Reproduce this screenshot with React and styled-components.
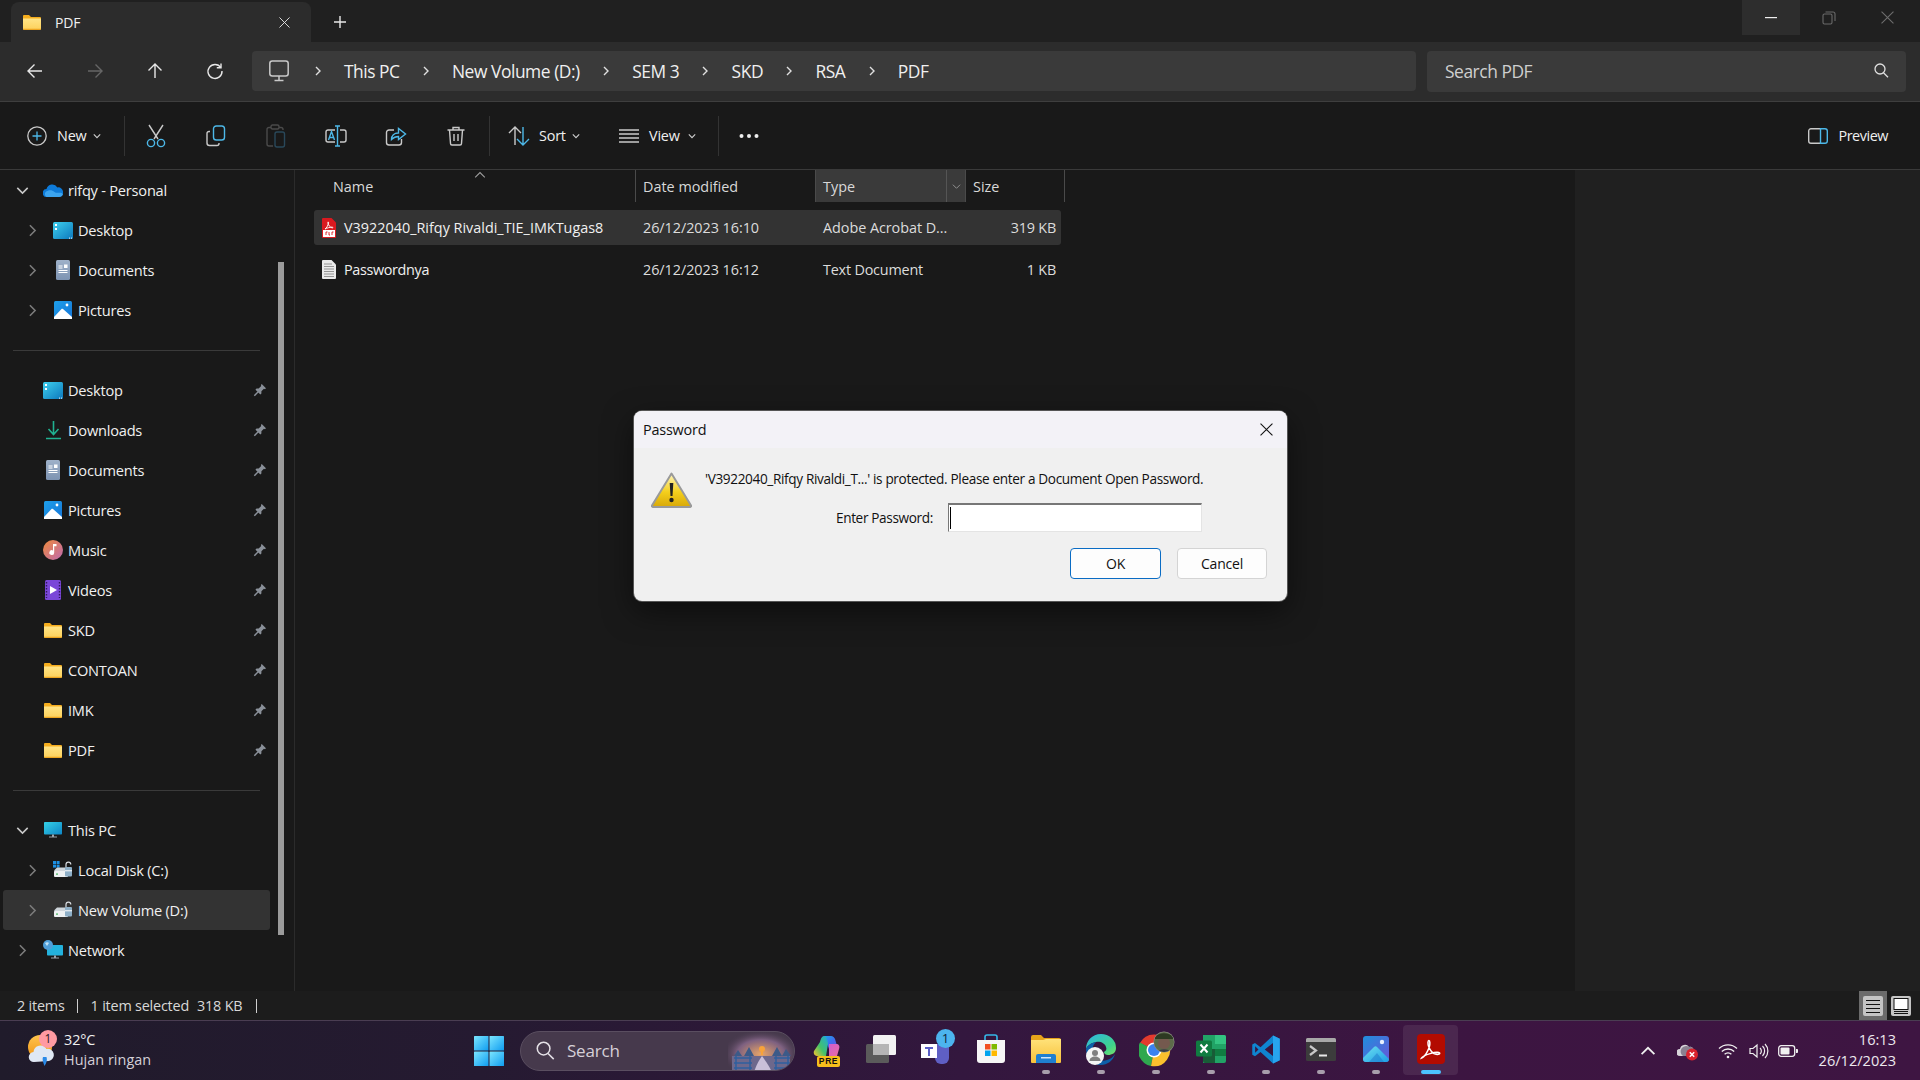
import React from "react";
import styled, { createGlobalStyle } from "styled-components";

const Global = createGlobalStyle`
  html, body { margin: 0; padding: 0; background: #191919; }
  * { box-sizing: border-box; }
  body { font-family: "Open Sans", "Noto Sans", "Liberation Sans", sans-serif; }
`;

const Screen = styled.div`
  position: relative; width: 1920px; height: 1080px; overflow: hidden;
  display: flex; flex-direction: column; color: #f0f0f0; background: #191919;
  font-size: 14px; letter-spacing: -0.2px;
`;

/* Title bar */
const TitleBar = styled.div`
  height: 42px; flex: none; background: #202020; display: flex; align-items: flex-start;
`;
const Tab = styled.div`
  width: 300px; height: 40px; margin: 2px 0 0 11px; padding: 0 21px 0 12px; background: #2c2c2c;
  border-radius: 8px 8px 0 0; display: flex; align-items: center; font-size: 14px;
`;
const TabLabel = styled.span` margin-left: 14px; flex: 1; `;
const NewTab = styled.div` margin: 14px 0 0 21px; width: 16px; height: 16px; display: flex; `;
const WindowControls = styled.div` margin-left: auto; margin-right: 4px; display: flex; `;
const WindowButton = styled.div`
  width: 58px; height: 35px; display: flex; align-items: center; justify-content: center;
  background: ${p => (p.$hover ? "#2d2d2d" : "transparent")};
`;

/* Address row */
const AddressRow = styled.div`
  height: 60px; flex: none; background: #2c2c2c; border-bottom: 1px solid #3e3e3e;
  display: flex; align-items: flex-start; padding: 9px 14px 0 5px;
`;
const NavButton = styled.div`
  width: 60px; height: 40px; display: flex; align-items: center; justify-content: center;
`;
const AddressBar = styled.div`
  flex: 1; height: 40px; margin-left: 7px; border-radius: 4px; background: #3a3a3a;
  display: flex; align-items: center; gap: 21.2px; padding-left: 17px; font-size: 17.4px; letter-spacing: -0.45px;
`;
const MonitorBox = styled.div` display: flex; margin-right: 2.5px; `;
const SearchBox = styled.div`
  width: 479px; height: 41px; margin-left: 11px; border-radius: 4px; background: #3a3a3a;
  display: flex; align-items: center; justify-content: space-between; padding: 0 17px 2px 18px;
  font-size: 17.4px; letter-spacing: -0.45px; color: #cfcfcf;
`;

/* Command bar */
const CommandBar = styled.div`
  height: 68px; flex: none; background: #191919; border-bottom: 1px solid #3a3a3a;
  display: flex; align-items: center; padding-left: 27px; padding-right: 32px; font-size: 14.4px;
`;
const MenuButton = styled.div`
  width: ${p => p.$w}px; padding-left: ${p => p.$pad || 0}px; display: flex; align-items: center; flex: none;
`;
const MenuLabel = styled.span` margin: 0 ${p => p.$right || 7}px 0 ${p => p.$left || 9}px; `;
const CommandSep = styled.div`
  width: 1px; height: 40px; flex: none; background: #333; margin-left: ${p => p.$ml || 0}px;
`;
const ToolButton = styled.div`
  width: 60px; flex: none; display: flex; justify-content: center; align-items: center;
  margin-left: ${p => p.$ml || 0}px;
`;
const MoreDots = styled.div` margin-left: 20px; display: flex; `;
const PreviewButton = styled.div`
  margin-left: auto; display: flex; align-items: center; gap: 10px; letter-spacing: -0.45px;
`;

/* Body */
const Body = styled.div` flex: 1; min-height: 0; display: flex; background: #191919; `;
const Sidebar = styled.div`
  width: 295px; flex: none; border-right: 1px solid #2b2b2b; display: flex;
`;
const NavList = styled.div` width: 267px; margin-left: 3px; flex: none; `;
const NavRow = styled.div`
  height: 40px; display: flex; align-items: center; border-radius: 3px; padding-right: 3px;
  padding-left: ${p => 11 + p.$level * 10}px; background: ${p => (p.$selected ? "#333" : "transparent")};
  font-size: 14.6px; letter-spacing: -0.22px;
`;
const ChevronSlot = styled.div` width: 16px; flex: none; display: flex; justify-content: center; `;
const NavIcon = styled.div` width: 26px; margin: 0 2px 0 10px; flex: none; display: flex; justify-content: center; `;
const PinSlot = styled.div` margin-left: auto; display: flex; `;
const NavSep = styled.div` height: 1px; margin: 20px 10px 19px 10px; background: #3a3a3a; `;
const ScrollTrack = styled.div` width: 6px; margin-left: 8px; flex: none; `;
const ScrollThumb = styled.div` margin-top: 92px; height: 673px; background: #9b9b9b; `;

const FileArea = styled.div` width: 1280px; flex: none; padding-left: 19px; `;
const HeaderGrid = styled.div`
  display: grid; grid-template-columns: 322px 180px 150px 99px; width: 751px; height: 32px; font-size: 14.4px; color: #d8d8d8;
  letter-spacing: 0;
`;
const HeaderCell = styled.div`
  position: relative; display: flex; align-items: center; border-right: 1px solid #4a4a4a;
  padding-left: ${p => p.$pad}px; background: ${p => (p.$hover ? "#3a3a3a" : "transparent")};
`;
const SortCaret = styled.div` position: absolute; left: 160px; top: -1px; display: flex; `;
const DropSplit = styled.div`
  position: absolute; right: 0; top: 0; bottom: 0; width: 19px; border-left: 1px solid #555;
  display: flex; align-items: center; justify-content: center;
`;
const FileList = styled.div` margin-top: 8px; display: flex; flex-direction: column; gap: 7px; `;
const FileRow = styled.div`
  display: grid; grid-template-columns: 322px 180px 150px 95px; width: 747px; height: 35px; align-items: center;
  border-radius: 3px; background: ${p => (p.$selected ? "#333" : "transparent")}; font-size: 14.4px;
`;
const FileName = styled.div` display: flex; align-items: center; padding-left: 8px; gap: 8px; `;
const NameText = styled.span` letter-spacing: ${p => p.$ls}px; `;
const FileCell = styled.div` padding-left: 7px; color: #dcdcdc; white-space: nowrap; letter-spacing: ${p => p.$ls ?? -0.05}px; `;
const FileSize = styled.div` text-align: right; padding-right: 5px; color: #dcdcdc; `;
const PreviewPane = styled.div` flex: 1; background: #202020; `;

/* Status bar */
const StatusBar = styled.div`
  height: 29px; flex: none; background: #1c1c1c; display: flex; align-items: center; padding: 0 9px 0 17px;
  font-size: 14.4px; color: #d8d8d8;
`;
const StatusSep = styled.span` width: 1px; height: 14px; background: #cfcfcf; margin: 0 13px 0 ${p => p.$ml || 12}px; `;
const StatusSpacer = styled.span` margin-left: ${p => p.$ml}px; `;
const ViewToggles = styled.div` margin-left: auto; display: flex; gap: 4px; align-items: center; `;
const ToggleFrame = styled.div`
  height: 29px; display: flex; align-items: center; justify-content: center;
  background: ${p => (p.$active ? "#6b6b6b" : "transparent")}; width: ${p => (p.$active ? 28 : 20)}px;
`;
const ToggleFace = styled.div`
  width: 20px; height: 20px; border-radius: 2px; background: #c4c4c4; display: flex;
`;

/* Taskbar */
const Taskbar = styled.div`
  height: 60px; flex: none; display: flex; align-items: center; border-top: 1px solid #4a3d52;
  background: linear-gradient(90deg, #201b2b 0%, #251a31 25%, #33173e 50%, #3c1541 75%, #3e1542 100%);
  letter-spacing: 0;
`;
const Weather = styled.div` width: 474px; flex: none; padding-left: 27px; display: flex; align-items: center; `;
const WeatherIcon = styled.div` position: relative; width: 30px; height: 36px; flex: none; display: flex; align-items: center; `;
const WeatherBadge = styled.div`
  position: absolute; left: 12px; top: -3px; width: 18px; height: 18px; border-radius: 50%;
  background: #ff9aa2; color: #2a1a22; font-size: 12px; line-height: 18px; text-align: center;
`;
const WeatherText = styled.div`
  margin: -2px 0 0 7px; display: flex; flex-direction: column; gap: 1px; font-size: 14.4px; line-height: 19px; letter-spacing: -0.1px;
`;
const WeatherSub = styled.span` color: #d5d0d8; letter-spacing: 0.05px; `;
const StartButton = styled.div` width: 30px; height: 30px; flex: none; margin-right: 16px; display: flex; `;
const SearchPill = styled.div`
  position: relative; overflow: hidden; width: 275px; height: 40px; flex: none; border-radius: 20px; margin-right: 3px;
  background: #46394c; border: 1px solid #5a4e60; display: flex; align-items: center; padding-left: 15px; gap: 12px;
  font-size: 17px; color: #d6d0d8; letter-spacing: -0.2px;
`;
const PillScene = styled.div` position: absolute; right: 0; top: 0; bottom: 0; display: flex; `;
const TaskSlots = styled.div` display: flex; flex: none; align-self: flex-start; margin-top: 4px; `;
const TaskSlot = styled.div`
  position: relative; width: 55px; height: 50px; padding-bottom: 2px; display: flex; align-items: center; justify-content: center;
  border-radius: 4px; background: ${p => (p.$active ? "rgba(255,255,255,0.08)" : "transparent")};
`;
const RunDot = styled.div`
  position: absolute; bottom: 1px; left: 50%; transform: translateX(-50%); height: 4px; border-radius: 2px;
  width: ${p => (p.$active ? 20 : 8)}px; background: ${p => (p.$active ? "#4cc2ff" : "#a89eac")};
`;
const IconBadge = styled.div`
  position: absolute; top: 4px; left: 28px; width: 19px; height: 19px; border-radius: 50%;
  background: #4cb4ee; color: #10253a; font-size: 13px; line-height: 19px; text-align: center;
`;
const PreBadge = styled.div`
  position: absolute; left: 19px; bottom: 8px; width: 23px; height: 11px; border-radius: 2px; background: #f7bf1c;
  color: #111; font: 700 8.5px/11px "Liberation Sans", sans-serif; text-align: center; letter-spacing: 0.6px;
`;
const Tray = styled.div` margin-left: auto; display: flex; align-items: center; padding-right: 24px; `;
const TrayIcon = styled.div` display: flex; margin-left: ${p => p.$ml}px; `;
const Clock = styled.div`
  margin: -2px 0 0 20.5px; text-align: right; font-size: 14.6px; line-height: 21px; color: #ece8ee; letter-spacing: 0;
`;

/* Dialog */
const Dialog = styled.div`
  position: absolute; left: 634px; top: 411px; width: 653px; height: 190px; background: #f0f0f0; color: #111;
  border-radius: 8px; overflow: hidden; box-shadow: 0 0 0 1px #555, 0 10px 30px rgba(0,0,0,.5);
  display: flex; flex-direction: column; font-size: 13.6px; letter-spacing: -0.35px;
`;
const DialogHeader = styled.div`
  height: 37px; flex: none; background: #f3f2f7; display: flex; align-items: center; justify-content: space-between;
  padding: 0 14px 0 9px; font-size: 14.4px; letter-spacing: -0.2px;
`;
const DialogBody = styled.div` flex: 1; display: flex; padding: 22px 20px 0 17px; `;
const WarnBox = styled.div` width: 41px; flex: none; margin: 2px 13px 0 0; `;
const DialogMain = styled.div` flex: 1; display: flex; flex-direction: column; `;
const Message = styled.div` height: 18px; line-height: 18px; white-space: nowrap; `;
const PasswordRow = styled.div` display: flex; align-items: center; margin: 15px 0 0 120px; `;
const PasswordLabel = styled.div` width: 108px; text-align: right; white-space: nowrap; `;
const PasswordField = styled.div`
  width: 254px; height: 29px; margin-left: 15px; background: #fff; padding: 2px 0 0 1px; display: flex;
  border-style: solid; border-width: 2px 1px 1px 1px; border-color: #777 #e4e4e4 #e4e4e4 #777;
`;
const Caret = styled.div` width: 1px; height: 22px; background: #000; `;
const ButtonRow = styled.div` display: flex; justify-content: flex-end; gap: 16px; margin-top: 16px; `;
const DialogButton = styled.div`
  width: ${p => p.$w}px; height: 31px; border-radius: 4px; background: #fdfdfd; font-size: 14px; letter-spacing: -0.2px;
  display: flex; align-items: center; justify-content: center;
  border: ${p => (p.$primary ? "1.5px solid #0a6cc4" : "1px solid #d4d4d4")};
`;

/* ---------- icons ---------- */
const Chev = ({ dir = "right", size = 10, color = "#e8e8e8", w = 1.4 }) => {
  const d = { right: "M3 1l4 4-4 4", down: "M1 3l4 4 4-4", up: "M1 7l4-4 4 4" }[dir];
  return <svg width={size} height={size} viewBox="0 0 10 10" fill="none" stroke={color} strokeWidth={w}><path d={d} /></svg>;
};
const Folder = ({ w = 18, h = 15 }) => (
  <svg width={w} height={h} viewBox="0 0 18 15">
    <defs><linearGradient id="fd" x1="0" y1="0" x2="0" y2="1"><stop offset="0" stopColor="#ffe487" /><stop offset="1" stopColor="#fdd15a" /></linearGradient></defs>
    <path d="M0 1.200C0 .5.5 0 1.200 0h4.300c.4 0 .7.1 1 .4L8 2h8.800c.7 0 1.200.5 1.200 1.200V4H0z" fill="#f5ad1d" />
    <path d="M0 3.400h18v10.400c0 .7-.5 1.200-1.200 1.200H1.200C.5 15 0 14.500 0 13.800z" fill="url(#fd)" />
    <path d="M0 13.800h18c0 .7-.5 1.200-1.200 1.200H1.200C.5 15 0 14.500 0 13.800z" fill="#eda520" />
  </svg>
);
const DesktopIcon = () => (
  <svg width="20" height="17" viewBox="0 0 20 17">
    <defs><linearGradient id="dk" x1="0" y1="0" x2="1" y2="1"><stop offset="0" stopColor="#3fd0ee" /><stop offset="1" stopColor="#0c78bd" /></linearGradient></defs>
    <rect width="20" height="17" rx="1.500" fill="url(#dk)" />
    <rect x="2" y="2" width="2" height="2" fill="#fff" /><rect x="2" y="6" width="2" height="2" fill="#fff" />
    <rect x="16" y="15.600" width="1" height="1" fill="#fff" /><rect x="18" y="15.600" width="1" height="1" fill="#fff" />
  </svg>
);
const DocsIcon = () => (
  <svg width="14" height="20" viewBox="0 0 14 20">
    <defs><linearGradient id="dc" x1="0" y1="0" x2="0" y2="1"><stop offset="0" stopColor="#9fb1c9" /><stop offset="1" stopColor="#7d93b2" /></linearGradient></defs>
    <rect width="14" height="20" rx="1.500" fill="url(#dc)" />
    <path d="M2.500 6h4M2.500 8h4M2.500 10.500h9M2.500 12.500h9" stroke="#fff" strokeWidth="1" />
    <rect x="8" y="4.500" width="3.500" height="3.500" fill="#fff" />
  </svg>
);
const PicturesIcon = () => (
  <svg width="18" height="18" viewBox="0 0 18 18">
    <defs><linearGradient id="pc" x1="0" y1="0" x2="1" y2="1"><stop offset="0" stopColor="#1ea0ea" /><stop offset="1" stopColor="#1575d8" /></linearGradient></defs>
    <rect width="18" height="18" rx="1.500" fill="url(#pc)" />
    <circle cx="13" cy="4" r="1.400" fill="#fff" />
    <path d="M0 16L7.500 8c.5-.5 1-.5 1.500 0l9 8v2H0z" fill="#fff" />
  </svg>
);
const DownloadIcon = () => (
  <svg width="15" height="20" viewBox="0 0 15 20" fill="none" stroke="#20b191" strokeWidth="1.600">
    <path d="M7.500 1v13M2.500 9l5 5.500 5-5.500M0 18.500h15" />
  </svg>
);
const MusicIcon = () => (
  <svg width="20" height="20" viewBox="0 0 20 20">
    <defs><linearGradient id="ms" x1="0" y1="0" x2="1" y2="1"><stop offset="0" stopColor="#ee8a3c" /><stop offset="1" stopColor="#bf6ab0" /></linearGradient></defs>
    <circle cx="10" cy="10" r="10" fill="url(#ms)" />
    <path d="M10 4h3.500v2.200H11.200V12.500a2.400 2.400 0 1 1-1.200-2z" fill="#fff" />
  </svg>
);
const VideosIcon = () => (
  <svg width="16" height="20" viewBox="0 0 16 20">
    <rect width="16" height="20" rx="1.500" fill="#7a47d8" />
    <path d="M5 6l7 4-7 4z" fill="#fff" />
    <path d="M1.500 2v16M14.500 2v16" stroke="#32195f" strokeWidth="1.400" strokeDasharray="1.500 1.500" />
  </svg>
);
const CloudIcon = () => (
  <svg width="20" height="13" viewBox="0 0 20 13">
    <path d="M4 13a4 4 0 0 1-.5-8A6 6 0 0 1 14.400 3.400 5 5 0 0 1 20 9c0 2.400-1.700 4-4 4z" fill="#0e7bd9" />
    <path d="M3 12.800A3.500 3.500 0 0 1 5 6.700c1.800-1 4.600-.4 6.500 1.200 1.400 1.200 3 1 4.200.8s3.800.2 4.200 1.500c-.5 1.700-2 2.800-4 2.800H4z" fill="#3ca5f0" />
  </svg>
);
const PcIcon = () => (
  <svg width="18" height="16" viewBox="0 0 18 16">
    <defs><linearGradient id="pcm" x1="0" y1="0" x2="1" y2="1"><stop offset="0" stopColor="#34d0e6" /><stop offset="1" stopColor="#0e86c6" /></linearGradient></defs>
    <rect width="18" height="12.500" rx=".8" fill="url(#pcm)" />
    <path d="M8 12.500h2v2h3v1H5v-1h3z" fill="#9aa3ac" />
  </svg>
);
const DiskIcon = ({ win }) => (
  <svg width="20" height="18" viewBox="0 0 20 18">
    {win && <g fill="#1c8fe2"><rect width="3" height="3" /><rect x="3.600" width="3" height="3" /><rect y="3.600" width="3" height="3" /><rect x="3.600" y="3.600" width="3" height="3" /></g>}
    <path d="M2 8.500l2-2h11v4H1V10z" fill="#cfd6dc" />
    <rect x="1" y="10" width="14" height="6" rx="1" fill="#eef1f3" />
    <rect x="3" y="12.500" width="2" height="1.200" fill="#45b25c" />
    <path d="M13 6V3.600a2.400 2.400 0 0 1 4.800 0" fill="none" stroke="#d9dde1" strokeWidth="1.200" />
    <rect x="12" y="6" width="7" height="9.500" rx="1" fill="#8fb0c8" />
    <rect x="12" y="9" width="7" height="1.400" fill="#dfe8ef" />
  </svg>
);
const NetworkIcon = () => (
  <svg width="20" height="20" viewBox="0 0 20 20">
    <rect x="4" y="5" width="16" height="10.500" rx=".8" fill="#23b2dd" />
    <path d="M11 15.500h2v2h3v1H8v-1h3z" fill="#9aa3ac" />
    <circle cx="5" cy="5" r="5" fill="#4f9ed8" />
    <path d="M2 3c1.500-1 3-1 4 0l-2 3z" fill="#bfe1f6" />
  </svg>
);
const Pin = () => (
  <svg width="14" height="14" viewBox="0 0 16 16" fill="#8a9099">
    <path d="M10 1.200L14.800 6 13.700 7 12.500 6.600 9.600 9.500 9.600 12 8.400 13.200 2.800 7.600 4 6.400 6.500 6.400 9.400 3.500 9 2.300z" />
    <path d="M6 10l-4.500 4.500" stroke="#8a9099" strokeWidth="1.600" />
  </svg>
);
const X = ({ s = 12, c = "#e6e6e6", w = 1 }) => (
  <svg width={s} height={s} viewBox="0 0 12 12" stroke={c} strokeWidth={w} fill="none"><path d="M.5.5l11 11M11.500.5l-11 11" /></svg>
);
const Arrow = ({ rot = 0, c = "#e8e8e8" }) => (
  <svg width="18" height="18" viewBox="0 0 18 18" fill="none" stroke={c} strokeWidth="1.400" style={{ transform: `rotate(${rot}deg)` }}>
    <path d="M16 9H2M8.500 2.500L2 9l6.500 6.500" />
  </svg>
);
const Refresh = () => (
  <svg width="18" height="18" viewBox="0 0 18 18" fill="none" stroke="#e8e8e8" strokeWidth="1.400">
    <path d="M14.800 5.500A7 7 0 1 0 16 9" /><path d="M15 1.500v4.200h-4.200" />
  </svg>
);
const Monitor = () => (
  <svg width="20" height="22" viewBox="0 0 20 22" fill="none" stroke="#c8c8c8" strokeWidth="1.500">
    <rect x=".8" y="1" width="18.400" height="15" rx="2.500" /><path d="M10 16v4M5.500 20.500h9" />
  </svg>
);
const Magnifier = ({ s = 15, c = "#e0e0e0", w = 1.300 }) => (
  <svg width={s} height={s} viewBox="0 0 15 15" fill="none" stroke={c} strokeWidth={w}>
    <circle cx="6" cy="6" r="5" /><path d="M9.500 9.800L14 14.300" />
  </svg>
);
const B = "#4db8e8"; const G = "#c9c9c9";
const NewIcon = () => (
  <svg width="20" height="20" viewBox="0 0 20 20" fill="none" strokeWidth="1.300">
    <circle cx="10" cy="10" r="9.200" stroke={G} /><path d="M10 5.500v9M5.500 10h9" stroke={B} />
  </svg>
);
const CutIcon = () => (
  <svg width="20" height="24" viewBox="0 0 20 24" fill="none" strokeWidth="1.400">
    <path d="M3 1l9 14M17 1L8 15" stroke={G} />
    <circle cx="5" cy="19" r="3.600" stroke={B} /><circle cx="15" cy="19" r="3.600" stroke={B} />
  </svg>
);
const CopyIcon = () => (
  <svg width="20" height="22" viewBox="0 0 20 22" fill="none" strokeWidth="1.400">
    <path d="M4 6.500H3A2 2 0 0 0 1 8.500V18a2.500 2.500 0 0 0 2.500 2.500H11a2 2 0 0 0 2-2v-.5" stroke={G} />
    <rect x="7.500" y="1" width="11" height="14" rx="2.800" stroke={B} />
  </svg>
);
const PasteIcon = () => (
  <svg width="20" height="24" viewBox="0 0 20 24" fill="none" strokeWidth="1.400">
    <path d="M5 3.500H3A2 2 0 0 0 1 5.500V20a2 2 0 0 0 2 2h4M13 3.500h2a2 2 0 0 1 2 2V6" stroke="#4a4a4a" />
    <rect x="5" y="1" width="8" height="4" rx="1.500" stroke="#4a4a4a" />
    <rect x="9" y="8" width="9.500" height="15" rx="2" stroke="#29485a" />
  </svg>
);
const RenameIcon = () => (
  <svg width="22" height="22" viewBox="0 0 22 22" fill="none" strokeWidth="1.400">
    <path d="M10 5H3a2 2 0 0 0-2 2v8a2 2 0 0 0 2 2h7M15 5h4a2 2 0 0 1 2 2v8a2 2 0 0 1-2 2h-4" stroke={G} />
    <path d="M12.500 1v20M10 1h5M10 21h5M3.500 15l3-8.500 3 8.500M4.500 12.500h4" stroke={B} />
  </svg>
);
const ShareIcon = () => (
  <svg width="22" height="22" viewBox="0 0 22 22" fill="none" strokeWidth="1.400">
    <path d="M9 5H4a2.500 2.500 0 0 0-2.500 2.500v10A2.500 2.500 0 0 0 4 20h10a2.500 2.500 0 0 0 2.500-2.500V14" stroke={G} />
    <path d="M6.500 14.500c0-4 2.500-6.500 7-6.500V3.500L20.500 9l-7 5.500v-3c-3 0-5 1-7 3z" stroke={B} />
  </svg>
);
const TrashIcon = () => (
  <svg width="18" height="20" viewBox="0 0 18 20" fill="none" stroke={G} strokeWidth="1.400">
    <path d="M.5 4h17M6 4V1.500h6V4M2.500 4l1 13.500a1.500 1.500 0 0 0 1.500 1.500h8a1.500 1.500 0 0 0 1.500-1.500L15.500 4M7 8v7M11 8v7" />
  </svg>
);
const SortIcon = () => (
  <svg width="22" height="20" viewBox="0 0 22 20" fill="none" strokeWidth="1.400">
    <path d="M7 19V1M1 7l6-6 6 6" stroke={G} /><path d="M15 1v18M9 13l6 6 6-6" stroke={B} />
  </svg>
);
const ViewIcon = () => (
  <svg width="20" height="14" viewBox="0 0 20 14" fill="none" stroke={G} strokeWidth="1.500">
    <path d="M0 1h20M0 5h20M0 9h20M0 13h20" />
  </svg>
);
const Dots = () => (
  <svg width="20" height="4" viewBox="0 0 20 4" fill="#eee"><circle cx="2.500" cy="2" r="2" /><circle cx="10" cy="2" r="2" /><circle cx="17.500" cy="2" r="2" /></svg>
);
const PreviewIcon = () => (
  <svg width="20" height="16" viewBox="0 0 20 16" fill="none" strokeWidth="1.400">
    <path d="M13 .7H3A2.300 2.300 0 0 0 .7 3v10A2.300 2.300 0 0 0 3 15.300h10" stroke={G} />
    <path d="M12.500.7H17A2.300 2.300 0 0 1 19.300 3v10a2.300 2.300 0 0 1-2.300 2.300h-4.500z" stroke={B} />
  </svg>
);
const PdfFile = () => (
  <svg width="14" height="20" viewBox="0 0 14 20">
    <path d="M1 0h8.500L14 4.500V19a1 1 0 0 1-1 1H1a1 1 0 0 1-1-1V1a1 1 0 0 1 1-1z" fill="#d9191f" />
    <rect x="1" y="12" width="12" height="7" fill="#fff" />
    <path d="M3 11c1.500-.8 3-3.500 3.500-6 .2-1.500-.8-1.500-.6 0 .4 2 2 4.300 4 4.800 1.500.3 1.500-.8 0-.7-2 0-5 1-6.900 1.900z" fill="none" stroke="#fff" strokeWidth=".9" />
    <path d="M4 14h1.500M4 14v3M7 14v3h1M10 14h1.500M10 14v3" stroke="#d9191f" strokeWidth=".9" fill="none" />
  </svg>
);
const TxtFile = () => (
  <svg width="14" height="19" viewBox="0 0 14 19">
    <path d="M0 1a1 1 0 0 1 1-1h8.500L14 4.500V18a1 1 0 0 1-1 1H1a1 1 0 0 1-1-1z" fill="#eaeaea" />
    <path d="M2 4h8M2 6.500h10M2 9h10M2 11.500h10M2 14h10M2 16.500h10" stroke="#8b8b8b" strokeWidth=".9" />
  </svg>
);
const Warning = () => (
  <svg width="41" height="36" viewBox="0 0 41 36">
    <defs><linearGradient id="wr" x1="0" y1="0" x2="0" y2="1"><stop offset="0" stopColor="#fff6c0" /><stop offset=".55" stopColor="#f4cf1c" /><stop offset="1" stopColor="#d8a808" /></linearGradient></defs>
    <path d="M20.500 1.500L40 33.500a1 1 0 0 1-1 1.500H2a1 1 0 0 1-1-1.500z" fill="url(#wr)" stroke="#9a9a9a" strokeWidth="2" strokeLinejoin="round" />
    <path d="M18.700 11h3.600l-.8 13h-2z" fill="#222" /><circle cx="20.500" cy="28" r="2.200" fill="#222" />
  </svg>
);
const WeatherArt = () => (
  <svg width="28" height="34" viewBox="0 0 28 34">
    <defs><linearGradient id="sun" x1="0" y1="0" x2="0" y2="1"><stop offset="0" stopColor="#ffc44d" /><stop offset="1" stopColor="#f09414" /></linearGradient></defs>
    <circle cx="13" cy="13" r="12" fill="url(#sun)" />
    <path d="M7 28a5 5 0 0 1-.5-10A7 7 0 0 1 19.500 15 6 6 0 0 1 22 27z" fill="#dfe8f4" />
    <path d="M16 23c-1 2 0 5 1.500 9 2-3 3-6 2-9z" fill="#2a8ae8" />
  </svg>
);
const Start = () => (
  <svg width="30" height="30" viewBox="0 0 30 30">
    <defs><linearGradient id="st" x1="0" y1="0" x2="1" y2="1"><stop offset="0" stopColor="#7ce6ff" /><stop offset="1" stopColor="#0f9cf0" /></linearGradient></defs>
    <g fill="url(#st)"><rect width="14.500" height="14.500" rx=".5" /><rect x="15.500" width="14.500" height="14.500" rx=".5" /><rect y="15.500" width="14.500" height="14.500" rx=".5" /><rect x="15.500" y="15.500" width="14.500" height="14.500" rx=".5" /></g>
  </svg>
);
const Scene = () => (
  <svg width="66" height="40" viewBox="0 0 66 40">
    <defs>
      <radialGradient id="sk" cx=".5" cy=".55" r=".6"><stop offset="0" stopColor="#e8a568" /><stop offset=".6" stopColor="#7d6080" /><stop offset="1" stopColor="#46394c" stopOpacity="0" /></radialGradient>
    </defs>
    <rect width="66" height="40" fill="url(#sk)" />
    <path d="M6 24l4-6 4 6zM16 24l5-9 5 9zM44 24l5-9 5 9zM54 24l4-7 5 7z" fill="#3c5a88" />
    <circle cx="34" cy="17" r="3" fill="#f8a33a" /><path d="M33 17h2v6h-2z" fill="#f8a33a" />
    <path d="M4 24h58v16H4z" fill="#6d688c" />
    <path d="M26 40c2-6 5-12 8-16 3 4 7 10 10 16z" fill="#c9bfd8" />
    <path d="M6 26h18M6 31h18M6 36h18M46 26h16M46 31h16M46 36h16M8 24v15M22 24v15M48 24v15M60 24v15" stroke="#2f5f9e" strokeWidth="1.500" />
  </svg>
);
const CopilotArt = () => (
  <svg width="30" height="30" viewBox="0 0 30 30">
    <defs>
      <linearGradient id="co1" x1="0" y1="0" x2="1" y2="1"><stop offset="0" stopColor="#17b1e8" /><stop offset=".5" stopColor="#3d6ff0" /><stop offset="1" stopColor="#6a4fd8" /></linearGradient>
      <linearGradient id="co2" x1="0" y1="1" x2="1" y2="0"><stop offset="0" stopColor="#f6c52e" /><stop offset=".45" stopColor="#43c26a" /><stop offset="1" stopColor="#20a8d8" /></linearGradient>
      <linearGradient id="co3" x1="0" y1="0" x2="1" y2="1"><stop offset="0" stopColor="#c85ad8" /><stop offset="1" stopColor="#f0709a" /></linearGradient>
    </defs>
    <path d="M11 2h9c2 0 3.500 1.500 4 3l3 10H18L14.500 5C14 3.500 12.500 2 11 2z" fill="url(#co1)" />
    <path d="M9 8c1-4 2-6 5-6 1.500 2 3 5 3 8l-2 12H7c-3 0-5-2-4-5z" fill="url(#co2)" />
    <path d="M18 10h7c3 0 4 2 3 5l-2 7c-1 3-3 4-5 4h-7c2 0 3-1 4-4z" fill="url(#co3)" />
  </svg>
);
const TaskViewArt = () => (
  <svg width="30" height="28" viewBox="0 0 30 28">
    <rect x="0" y="9" width="23" height="19" rx="1.500" fill="#5b5b5b" />
    <rect x="7" y="0" width="23" height="20" rx="1.500" fill="#f2f2f2" />
    <rect x="7" y="9" width="16" height="11" fill="#b5b5b5" />
  </svg>
);
const TeamsArt = () => (
  <svg width="30" height="30" viewBox="0 0 30 30">
    <path d="M14 10h14v14a6 6 0 0 1-6 6h-2a6 6 0 0 1-6-6z" fill="#5f5fc4" />
    <circle cx="21" cy="6" r="5" fill="#7b83eb" />
    <rect x="0" y="10" width="16" height="14" fill="#fff" />
    <path d="M4 13h8v2H9v7H7v-7H4z" fill="#5b5fc7" />
  </svg>
);
const StoreArt = () => (
  <svg width="30" height="30" viewBox="0 0 30 30">
    <path d="M9 6V3a2 2 0 0 1 2-2h8a2 2 0 0 1 2 2v3" fill="none" stroke="#35b8e8" strokeWidth="1.600" />
    <path d="M1 6h28v20a3 3 0 0 1-3 3H4a3 3 0 0 1-3-3z" fill="#f6f6f6" />
    <rect x="9" y="10" width="5.500" height="5.500" fill="#f25022" /><rect x="15.500" y="10" width="5.500" height="5.500" fill="#7fba00" />
    <rect x="9" y="16.500" width="5.500" height="5.500" fill="#00a4ef" /><rect x="15.500" y="16.500" width="5.500" height="5.500" fill="#ffb900" />
  </svg>
);
const ExplorerArt = () => (
  <svg width="30" height="28" viewBox="0 0 30 28">
    <defs><linearGradient id="ex" x1="0" y1="0" x2="0" y2="1"><stop offset="0" stopColor="#ffe27a" /><stop offset="1" stopColor="#f7c13a" /></linearGradient></defs>
    <path d="M0 2a2 2 0 0 1 2-2h8l3 3h15a2 2 0 0 1 2 2v3H0z" fill="#e6a31a" />
    <path d="M0 5h12l3-1h15v23a1 1 0 0 1-1 1H1a1 1 0 0 1-1-1z" fill="url(#ex)" />
    <path d="M5 28v-7a2 2 0 0 1 2-2h16a2 2 0 0 1 2 2v7z" fill="#1f7fd0" /><rect x="10" y="22" width="10" height="1.500" fill="#cfe6fa" />
  </svg>
);
const EdgeArt = () => (
  <svg width="30" height="32" viewBox="0 0 30 32">
    <defs>
      <linearGradient id="ed1" x1="0" y1="0" x2="1" y2="1"><stop offset="0" stopColor="#2fb5e6" /><stop offset=".7" stopColor="#3fd48a" /><stop offset="1" stopColor="#7be06a" /></linearGradient>
    </defs>
    <path d="M15 1a15 14 0 0 1 15 14c0 5-4 7-8 7-2 0-4-1-4-3 2-1 3-3 2-5-1-4-6-6-10-5C5 10 1 13 0 16 0 8 6 1 15 1z" fill="url(#ed1)" />
    <path d="M0 16c1-3 5-6 10-7-3 3-5 8-3 13 2 4 8 7 14 5 4-1 6-3 8-6-2 7-8 11-14 11C7 32 0 25 0 16z" fill="#0d5fa8" />
    <circle cx="9" cy="23" r="9" fill="#f4f4f4" /><circle cx="9" cy="20" r="3" fill="#7f7f7f" /><path d="M3.500 28c0-3 2.500-4.500 5.500-4.500s5.500 1.500 5.500 4.500z" fill="#7f7f7f" />
  </svg>
);
const ChromeArt = () => (
  <svg width="36" height="36" viewBox="0 0 36 36" style={{ marginLeft: 3 }}>
    <defs><clipPath id="ph"><circle cx="25" cy="11" r="10" /></clipPath></defs>
    <g transform="translate(0 4)">
      <path d="M15 15L29 7.500A16 16 0 0 0 1 8z" fill="#e33b2e" />
      <path d="M15 15L1 7.500A16 16 0 0 0 12 31z" fill="#2fa84f" />
      <path d="M15 15L12 31A16 16 0 0 0 29 7.500z" fill="#fbc02d" />
      <circle cx="15" cy="15" r="7.500" fill="#fff" /><circle cx="15" cy="15" r="6" fill="#3b82f0" />
    </g>
    <circle cx="25" cy="11" r="10.500" fill="#8d8f88" />
    <g clipPath="url(#ph)">
      <rect x="14" y="0" width="22" height="22" fill="#5d6b4a" />
      <circle cx="25" cy="12" r="6" fill="#74594e" /><path d="M17 22c2-5 14-5 16 0z" fill="#3a3d48" />
      <path d="M16 6c4-5 14-5 18 0v2H16z" fill="#2d3a22" />
    </g>
  </svg>
);
const ExcelArt = () => (
  <svg width="30" height="28" viewBox="0 0 30 28">
    <path d="M7 0h21a2 2 0 0 1 2 2v24a2 2 0 0 1-2 2H7z" fill="#21a366" />
    <path d="M19 0h9a2 2 0 0 1 2 2v7H19z" fill="#33c481" /><path d="M7 14h12v14H9a2 2 0 0 1-2-2z" fill="#185c37" /><path d="M19 14h11v7H19z" fill="#107c41" />
    <rect x="0" y="5.500" width="16" height="16" rx="1.500" fill="#107c41" />
    <path d="M4.500 9.500l7 8M11.500 9.500l-7 8" stroke="#fff" strokeWidth="2" />
  </svg>
);
const CodeArt = () => (
  <svg width="30" height="31" viewBox="0 0 24 24">
    <path fillRule="evenodd" d="M17.600.8L23 3.400v17.200l-5.400 2.600-10-9.300-4.400 3.400L1 16.100V7.900l2.200-1.200 4.400 3.400zM17.600 6.800L11 12l6.600 5.200zM3.300 9.400v5.200L6 12z" fill="#0f85d0" />
    <path d="M17.600.8L23 3.400v17.200l-5.400 2.600z" fill="#27a4ee" />
  </svg>
);
const TerminalArt = () => (
  <svg width="30" height="23" viewBox="0 0 30 23">
    <rect width="30" height="23" rx="1.500" fill="#3c3c3c" /><path d="M0 1.500A1.500 1.500 0 0 1 1.500 0h27A1.500 1.500 0 0 1 30 1.500V4H0z" fill="#a8a8a8" />
    <path d="M4 8l6 4.500L4 17" fill="none" stroke="#c8c8c8" strokeWidth="2.200" /><path d="M13 17.500h8" stroke="#e8e8e8" strokeWidth="2" />
  </svg>
);
const PhotosArt = () => (
  <svg width="26" height="26" viewBox="0 0 26 26">
    <defs>
      <linearGradient id="ph1" x1="0" y1="0" x2="1" y2="1"><stop offset="0" stopColor="#1f8fdd" /><stop offset="1" stopColor="#6a55d8" /></linearGradient>
      <linearGradient id="ph2" x1="0" y1="0" x2="1" y2="1"><stop offset="0" stopColor="#6fe0f0" /><stop offset="1" stopColor="#1c9ee6" /></linearGradient>
    </defs>
    <rect width="26" height="26" rx="3" fill="url(#ph1)" /><circle cx="19" cy="6" r="2.200" fill="#e8f0ff" />
    <path d="M0 22L11 11c1-1 2-1 3 0l12 12v0a3 3 0 0 1-3 3H3a3 3 0 0 1-3-3z" fill="url(#ph2)" />
    <path d="M6 26l8-9 7 9z" fill="#1a6fc8" opacity=".45" />
  </svg>
);
const AcrobatArt = () => (
  <svg width="28" height="30" viewBox="0 0 28 30">
    <rect width="28" height="30" rx="4" fill="#b30b00" />
    <path d="M5.500 23.500c2.500-1.500 5-5.500 6.800-10.500.9-3 .7-6.500-.4-6.500s-1.300 3.200-.2 6.200c1.400 3.600 4.600 7 7.400 7.600 2.600.5 4-.5 3.500-1.300-.8-1-5.500-.7-9.500.6-4.200 1.300-8.200 3.500-8.600 4.400z" fill="none" stroke="#fff" strokeWidth="1.500" />
  </svg>
);
const TrayCloud = () => (
  <svg width="22" height="20" viewBox="0 0 22 20">
    <path d="M3 15a3.500 3.500 0 0 1 0-7 5 5 0 0 1 9-2 4 4 0 0 1 5 4v5z" fill="#d8d4da" /><path d="M6 15a5 5 0 0 1 6-9 4 4 0 0 1 5 4v5z" fill="#8a8090" />
    <circle cx="15" cy="13.500" r="6" fill="#d9232e" /><path d="M12.800 11.300l4.400 4.400M17.200 11.300l-4.400 4.400" stroke="#fff" strokeWidth="1.500" />
  </svg>
);
const Wifi = () => (
  <svg width="20" height="16" viewBox="0 0 20 16" fill="none" stroke="#f0f0f0" strokeWidth="1.300">
    <path d="M1 5.500a13 13 0 0 1 18 0M3.800 8.500a9 9 0 0 1 12.400 0M6.600 11.300a5 5 0 0 1 6.800 0" /><circle cx="10" cy="14" r="1.300" fill="#f0f0f0" stroke="none" />
  </svg>
);
const Speaker = () => (
  <svg width="20" height="16" viewBox="0 0 20 16" fill="none" stroke="#f0f0f0" strokeWidth="1.200">
    <path d="M1 5.500v5h3l4 3.500V2L4 5.500zM11 5a4 4 0 0 1 0 6M13.500 3a7 7 0 0 1 0 10M16 1a10 10 0 0 1 0 14" />
  </svg>
);
const Battery = () => (
  <svg width="20" height="12" viewBox="0 0 20 12" fill="none">
    <rect x=".7" y=".7" width="16" height="10.600" rx="2.500" stroke="#f0f0f0" strokeWidth="1.300" /><rect x="2.500" y="2.500" width="9" height="7" rx="1" fill="#f0f0f0" /><path d="M18 4v4h.8A1 1 0 0 0 20 7V5a1 1 0 0 0-1.200-1z" fill="#f0f0f0" />
  </svg>
);
const ListViewGlyph = () => (
  <svg width="20" height="20" viewBox="0 0 20 20" stroke="#111" strokeWidth="1"><path d="M3 4.500h14M3 8.500h14M3 12.500h14M3 16.500h14" /></svg>
);
const ThumbGlyph = () => (
  <svg width="20" height="20" viewBox="0 0 20 20"><rect x="3" y="2.500" width="14" height="11" fill="#fff" stroke="#111" /><path d="M3 15.500h14M3 17.500h14" stroke="#111" /></svg>
);

/* ---------- data ---------- */
const crumbs = ["This PC", "New Volume (D:)", "SEM 3", "SKD", "RSA", "PDF"];
const pinned = [
  ["Desktop", <DesktopIcon />], ["Downloads", <DownloadIcon />], ["Documents", <DocsIcon />], ["Pictures", <PicturesIcon />],
  ["Music", <MusicIcon />], ["Videos", <VideosIcon />], ["SKD", <Folder />], ["CONTOAN", <Folder />], ["IMK", <Folder />], ["PDF", <Folder />],
];
const tasks = [
  [<CopilotArt />, <PreBadge>PRE</PreBadge>], [<TaskViewArt />], [<TeamsArt />, <IconBadge>1</IconBadge>], [<StoreArt />],
  [<ExplorerArt />, null, 1], [<EdgeArt />, null, 1], [<ChromeArt />, null, 1], [<ExcelArt />, null, 1],
  [<CodeArt />, null, 1], [<TerminalArt />, null, 1], [<PhotosArt />, null, 1], [<AcrobatArt />, null, 2],
];

const Row = ({ level = 0, chev, icon, label, pin, selected }) => (
  <NavRow $level={level} $selected={selected}>
    <ChevronSlot>{chev && <Chev dir={chev} size={13} color={chev === "down" ? "#c8c8c8" : "#7c7c7c"} w={1.2} />}</ChevronSlot>
    <NavIcon>{icon}</NavIcon>
    <span>{label}</span>
    {pin && <PinSlot><Pin /></PinSlot>}
  </NavRow>
);

export default function App() {
  return (
    <Screen>
      <Global />
      <TitleBar>
        <Tab>
          <Folder />
          <TabLabel>PDF</TabLabel>
          <X s={11} c="#e8e8e8" />
        </Tab>
        <NewTab>
          <svg width="16" height="16" viewBox="0 0 16 16" stroke="#e8e8e8" strokeWidth="1.400"><path d="M8 2v12M2 8h12" /></svg>
        </NewTab>
        <WindowControls>
          <WindowButton $hover><svg width="12" height="2"><rect width="12" height="1.200" fill="#eee" /></svg></WindowButton>
          <WindowButton>
            <svg width="14" height="14" viewBox="0 0 14 14" fill="none" stroke="#6a6a6a" strokeWidth="1.100"><rect x="1" y="3" width="9" height="10" rx="1.500" /><path d="M3.500 1H11a2 2 0 0 1 2 2v7" /></svg>
          </WindowButton>
          <WindowButton><X s={13} c="#6e6e6e" /></WindowButton>
        </WindowControls>
      </TitleBar>

      <AddressRow>
        <NavButton><Arrow /></NavButton>
        <NavButton><Arrow rot={180} c="#666" /></NavButton>
        <NavButton><Arrow rot={90} /></NavButton>
        <NavButton><Refresh /></NavButton>
        <AddressBar>
          <MonitorBox><Monitor /></MonitorBox>
          {crumbs.map(c => (
            <React.Fragment key={c}>
              <Chev size={10} color="#e0e0e0" />
              <span>{c}</span>
            </React.Fragment>
          ))}
        </AddressBar>
        <SearchBox>
          <span>Search PDF</span>
          <Magnifier />
        </SearchBox>
      </AddressRow>

      <CommandBar>
        <MenuButton $w={97}><NewIcon /><MenuLabel $left={10}>New</MenuLabel><Chev dir="down" size={8} color="#cfcfcf" /></MenuButton>
        <CommandSep />
        <ToolButton $ml={1}><CutIcon /></ToolButton>
        <ToolButton><CopyIcon /></ToolButton>
        <ToolButton><PasteIcon /></ToolButton>
        <ToolButton><RenameIcon /></ToolButton>
        <ToolButton><ShareIcon /></ToolButton>
        <ToolButton><TrashIcon /></ToolButton>
        <CommandSep $ml={3} />
        <MenuButton $w={110} $pad={18}><SortIcon /><MenuLabel $right={6}>Sort</MenuLabel><Chev dir="down" size={8} color="#cfcfcf" /></MenuButton>
        <MenuButton $w={118} $pad={19}><ViewIcon /><MenuLabel $left={10} $right={8}>View</MenuLabel><Chev dir="down" size={8} color="#cfcfcf" /></MenuButton>
        <CommandSep />
        <MoreDots><Dots /></MoreDots>
        <PreviewButton><PreviewIcon /><span>Preview</span></PreviewButton>
      </CommandBar>

      <Body>
        <Sidebar>
          <NavList>
            <Row chev="down" icon={<CloudIcon />} label="rifqy - Personal" />
            <Row level={1} chev="right" icon={<DesktopIcon />} label="Desktop" />
            <Row level={1} chev="right" icon={<DocsIcon />} label="Documents" />
            <Row level={1} chev="right" icon={<PicturesIcon />} label="Pictures" />
            <NavSep />
            {pinned.map(([label, icon]) => <Row key={label} icon={icon} label={label} pin />)}
            <NavSep />
            <Row chev="down" icon={<PcIcon />} label="This PC" />
            <Row level={1} chev="right" icon={<DiskIcon win />} label="Local Disk (C:)" />
            <Row level={1} chev="right" icon={<DiskIcon />} label="New Volume (D:)" selected />
            <Row chev="right" icon={<NetworkIcon />} label="Network" />
          </NavList>
          <ScrollTrack><ScrollThumb /></ScrollTrack>
        </Sidebar>
        <FileArea>
          <HeaderGrid>
            <HeaderCell $pad={19}>Name<SortCaret><Chev dir="up" size={12} color="#a0a0a0" w={0.9} /></SortCaret></HeaderCell>
            <HeaderCell $pad={7}>Date modified</HeaderCell>
            <HeaderCell $pad={7} $hover>Type<DropSplit><Chev dir="down" size={9} color="#999" w={1} /></DropSplit></HeaderCell>
            <HeaderCell $pad={7}>Size</HeaderCell>
          </HeaderGrid>
          <FileList>
            <FileRow $selected>
              <FileName><PdfFile /><NameText $ls={0}>V3922040_Rifqy Rivaldi_TIE_IMKTugas8</NameText></FileName>
              <FileCell>26/12/2023 16:10</FileCell>
              <FileCell>Adobe Acrobat D...</FileCell>
              <FileSize>319 KB</FileSize>
            </FileRow>
            <FileRow>
              <FileName><TxtFile /><NameText $ls={-0.35}>Passwordnya</NameText></FileName>
              <FileCell>26/12/2023 16:12</FileCell>
              <FileCell $ls={-0.2}>Text Document</FileCell>
              <FileSize>1 KB</FileSize>
            </FileRow>
          </FileList>
        </FileArea>
        <PreviewPane />
      </Body>

      <StatusBar>
        <span>2 items</span><StatusSep />
        <span>1 item selected</span><StatusSpacer $ml={8}>318 KB</StatusSpacer><StatusSep $ml={14} />
        <ViewToggles>
          <ToggleFrame $active><ToggleFace><ListViewGlyph /></ToggleFace></ToggleFrame>
          <ToggleFrame><ToggleFace><ThumbGlyph /></ToggleFace></ToggleFrame>
        </ViewToggles>
      </StatusBar>

      <Taskbar>
        <Weather>
          <WeatherIcon><WeatherArt /><WeatherBadge>1</WeatherBadge></WeatherIcon>
          <WeatherText><span>32°C</span><WeatherSub>Hujan ringan</WeatherSub></WeatherText>
        </Weather>
        <StartButton><Start /></StartButton>
        <SearchPill>
          <Magnifier s={19} c="#e4e0e6" w={1.200} />
          <span>Search</span>
          <PillScene><Scene /></PillScene>
        </SearchPill>
        <TaskSlots>
          {tasks.map(([art, extra, run], i) => (
            <TaskSlot key={i} $active={run === 2}>
              {art}{extra}
              {run && <RunDot $active={run === 2} />}
            </TaskSlot>
          ))}
        </TaskSlots>
        <Tray>
          <TrayIcon $ml={0}><Chev dir="up" size={16} color="#f0f0f0" w={1.100} /></TrayIcon>
          <TrayIcon $ml={21}><TrayCloud /></TrayIcon>
          <TrayIcon $ml={19}><Wifi /></TrayIcon>
          <TrayIcon $ml={11}><Speaker /></TrayIcon>
          <TrayIcon $ml={9}><Battery /></TrayIcon>
          <Clock>16:13<br />26/12/2023</Clock>
        </Tray>
      </Taskbar>

      <Dialog>
        <DialogHeader><span>Password</span><X s={13} c="#111" /></DialogHeader>
        <DialogBody>
          <WarnBox><Warning /></WarnBox>
          <DialogMain>
            <Message>'V3922040_Rifqy Rivaldi_T...' is protected. Please enter a Document Open Password.</Message>
            <PasswordRow>
              <PasswordLabel>Enter Password:</PasswordLabel>
              <PasswordField><Caret /></PasswordField>
            </PasswordRow>
            <ButtonRow>
              <DialogButton $w={91} $primary>OK</DialogButton>
              <DialogButton $w={90}>Cancel</DialogButton>
            </ButtonRow>
          </DialogMain>
        </DialogBody>
      </Dialog>
    </Screen>
  );
}
